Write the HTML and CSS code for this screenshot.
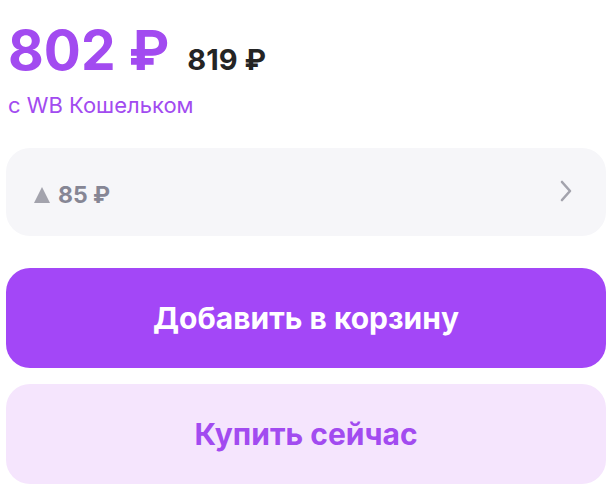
FILE: index.html
```html
<!DOCTYPE html>
<html lang="ru">
<head>
  <meta charset="UTF-8" />
  <meta name="viewport" content="width=device-width, initial-scale=1.0" />
  <title>Цена товара</title>
  <link rel="stylesheet" href="styles.css">
</head>
<body>
  <div class="price-card">
    <div class="price-row">
      <span class="price-main">802 ₽</span>
      <span class="price-old">819 ₽</span>
    </div>
    <div class="wallet">с WB Кошельком</div>

    <div class="diff">
      <span class="diff-value"><span class="tri"></span>85 ₽</span>
      <svg class="chevron" width="12" height="22" viewBox="0 0 12 22">
        <path d="M2 2 L10 11 L2 20" fill="none" stroke="#a3a3ad" stroke-width="2.6" stroke-linecap="round" stroke-linejoin="round"/>
      </svg>
    </div>

    <button class="btn btn-cart">Добавить в корзину</button>
    <button class="btn btn-buy">Купить сейчас</button>
  </div>
</body>
</html>
```

FILE: styles.css
```css
body {
  margin: 0;
  background: #ffffff;
  font-family: Inter, 'Noto Sans', sans-serif;
}
.price-card {
  padding: 20px 8px 0 6px;
  display: flex;
  flex-direction: column;
}
.price-row {
  display: flex;
  align-items: baseline;
  gap: 18px;
  padding-left: 2px;
  line-height: 60px;
}
.price-main {
  font-size: 55px;
  font-weight: 700;
  color: #a24bf0;
}
.price-old {
  font-size: 29px;
  font-weight: 700;
  color: #242424;
}
.wallet {
  padding-left: 2px;
  margin-top: 1px;
  font-size: 22px;
  color: #a24bf0;
  line-height: 28px;
}
.diff {
  margin-top: 29px;
  height: 88px;
  border-radius: 24px;
  background: #f6f6f9;
  display: flex;
  align-items: center;
  justify-content: space-between;
  padding: 0 34px 0 28px;
}
.diff-value {
  display: flex;
  align-items: center;
  gap: 8px;
  font-size: 23px;
  font-weight: 700;
  color: #868695;
  margin-top: 6px;
}
.tri {
  width: 0;
  height: 0;
  border-left: 8px solid transparent;
  border-right: 8px solid transparent;
  border-bottom: 16px solid #a3a3ad;
}
.chevron {
  margin-top: -2px;
}
.btn {
  height: 100px;
  border: none;
  border-radius: 24px;
  font-family: Inter, 'Noto Sans', sans-serif;
  font-size: 30px;
  font-weight: 700;
  cursor: pointer;
}
.btn-cart {
  margin-top: 32px;
  background: #a347f7;
  color: #ffffff;
}
.btn-buy {
  margin-top: 16px;
  background: #f5e5fd;
  color: #a24bf0;
}
```
